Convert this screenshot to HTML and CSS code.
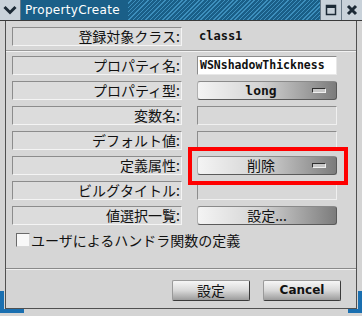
FILE: index.html
```html
<!DOCTYPE html>
<html lang="ja">
<head>
<meta charset="UTF-8">
<title>PropertyCreate</title>
<link rel="stylesheet" href="styles.css">
</head>
<body>
<div class="window">
  <div class="titlebar">
    <div class="tb-menu">
      <svg width="14" height="10" viewBox="0 0 14 10"><path d="M1.5 2 L7 7.5 L12.5 2" fill="none" stroke="#1c2a36" stroke-width="3"/></svg>
    </div>
    <div class="tb-title">PropertyCreate</div>
    <div class="tb-stripes"></div>
    <div class="tb-btn">
      <svg width="12" height="12" viewBox="0 0 12 12"><rect x="1.5" y="1.5" width="9" height="9" fill="none" stroke="#1c2a36" stroke-width="1.5"/><rect x="1" y="1" width="10" height="3" fill="#1c2a36"/></svg>
    </div>
    <div class="tb-btn">
      <svg width="12" height="12" viewBox="0 0 12 12"><path d="M2 2 L10 10 M10 2 L2 10" stroke="#1c2a36" stroke-width="3"/></svg>
    </div>
  </div>

  <div class="client">
    <div class="panel">
      <div class="section first">
        <div class="label">登録対象クラス:</div>
        <div class="value">class1</div>
      </div>
      <div class="section rows">
        <div class="label">プロパティ名:</div>
        <div class="field text">WSNshadowThickness</div>

        <div class="label">プロパティ型:</div>
        <div class="field option"><span>long</span><i class="ind"></i></div>

        <div class="label">変数名:</div>
        <div class="field empty"></div>

        <div class="label">デフォルト値:</div>
        <div class="field empty"></div>

        <div class="label">定義属性:</div>
        <div class="field option jp"><span>削除</span><i class="ind"></i></div>

        <div class="label">ビルグタイトル:</div>
        <div class="field empty"></div>

        <div class="label">値選択一覧:</div>
        <div class="field option jp push"><span>設定...</span></div>
      </div>
      <div class="check">
        <span class="box"></span>
        <span>ユーザによるハンドラ関数の定義</span>
      </div>
    </div>
    <div class="actions">
      <button class="btn jp">設定</button>
      <button class="btn bold">Cancel</button>
    </div>
  </div>

  <div class="highlight"></div>
  <div class="corner left"></div>
  <div class="corner right"></div>
</div>
</body>
</html>
```

FILE: styles.css
```css
body{
    margin: 0;
    padding: 0;
    background: #d4d4d4;
}

.window{
    position: relative;
    width: 362px;
    height: 316px;
    display: flex;
    flex-direction: column;
    background: #d4d4d4;
    font-family: "Noto Sans CJK JP", "DejaVu Sans", sans-serif;
    overflow: hidden;
}

/* title bar */
.titlebar{
    height: 20px;
    display: flex;
    background: #1a5f88;
    border-bottom: 1px solid #3a3a3a;
}
.tb-menu{
    width: 20px;
    display: flex;
    align-items: center;
    justify-content: center;
    background: #c9d2da;
    border-right: 1px solid #6a7a88;
}
.tb-title{
    padding: 0 8px 0 4px;
    color: #fff;
    font-family: "DejaVu Sans", sans-serif;
    font-size: 12px;
    line-height: 20px;
    letter-spacing: 0.3px;
}
.tb-stripes{
    flex: 1;
    background: repeating-linear-gradient(135deg, #1a5f88 0, #1a5f88 2px, #3d8fbd 2px, #3d8fbd 3px);
}
.tb-btn{
    width: 20px;
    display: flex;
    align-items: center;
    justify-content: center;
    background: #c9d2da;
    border-left: 1px solid #6a7a88;
}

/* client area */
.client{
    flex: 1;
    margin: 0 5px 7px 5px;
    display: flex;
    flex-direction: column;
    border: 1px solid #505050;
    border-top: none;
    background: #d4d4d4;
}
.panel{
    height: 247px;
    border-bottom: 1px solid #8a8a8a;
    box-shadow: 0 1px 0 #f0f0f0;
    background: #d6d6d6;
}
.section{
    display: grid;
    grid-template-columns: 170px 140px;
    column-gap: 15px;
    padding-left: 6px;
}
.first{
    padding-top: 6px;
    height: 23px;
    border-bottom: 1px solid #9a9a9a;
    box-shadow: 0 1px 0 #f2f2f2;
}
.rows{
    padding-top: 5px;
    row-gap: 6px;
}

.label{
    height: 17px;
    border: 1px solid;
    border-color: #8c8c8c #f4f4f4 #f4f4f4 #8c8c8c;
    background: #dcdcdc;
    text-align: right;
    font-size: 14px;
    line-height: 17px;
    color: #111;
    padding-right: 1px;
}
.value{
    padding-left: 2px;
    font-family: "DejaVu Sans Mono", monospace;
    font-weight: bold;
    font-size: 12px;
    line-height: 19px;
    color: #111;
}

.field{
    height: 17px;
    border: 1px solid;
    font-size: 14px;
    line-height: 17px;
}
.text{
    background: #fff;
    border-color: #8c8c8c #e8e8e8 #e8e8e8 #8c8c8c;
    padding-left: 2px;
    font-family: "DejaVu Sans Mono", monospace;
    font-weight: bold;
    font-size: 11.5px;
    color: #111;
}
.empty{
    background: #d8d8d8;
    border-color: #8c8c8c #f0f0f0 #f0f0f0 #8c8c8c;
}
.option{
    position: relative;
    border-color: #8a8a8a #5a5a5a #5a5a5a #b0b0b0;
    border-radius: 3px;
    background: linear-gradient(to right, #f4f4f4, #d4d4d4 45%, #7c7c7c);
    text-align: center;
    font-family: "DejaVu Sans Mono", monospace;
    font-weight: bold;
    font-size: 13px;
    color: #111;
}
.option span{
    display: inline-block;
    margin-left: -12px;
}
.option.jp{
    font-family: "Noto Sans CJK JP", sans-serif;
    font-weight: normal;
    font-size: 14px;
}
.push span{
    margin-left: 0;
}
.ind{
    position: absolute;
    right: 10px;
    top: 6px;
    width: 12px;
    height: 3px;
    border: 1px solid #303030;
    border-bottom-color: #f0f0f0;
    border-right-color: #f0f0f0;
    background: #c8c8c8;
}

.check{
    display: flex;
    align-items: center;
    gap: 1px;
    padding: 6px 0 0 10px;
    font-size: 14px;
    color: #111;
    line-height: 18px;
}
.box{
    width: 12px;
    height: 12px;
    background: #f8f8f8;
    border: 1px solid;
    border-color: #6a6a6a #d8d8d8 #d8d8d8 #6a6a6a;
}

/* buttons */
.actions{
    flex: 1;
    display: flex;
    justify-content: flex-end;
    align-items: flex-start;
    gap: 13px;
    padding: 11px 15px 0 0;
}
.btn{
    width: 78px;
    height: 21px;
    padding: 0;
    border: 1px solid;
    border-color: #9a9a9a #3a3a3a #3a3a3a #9a9a9a;
    border-radius: 2px;
    background: linear-gradient(#f6f6f6, #d8d8d8 50%, #9c9c9c);
    color: #111;
    font-family: "Noto Sans CJK JP", sans-serif;
    font-size: 14px;
    line-height: 19px;
}
.btn.bold{
    font-family: "DejaVu Sans", sans-serif;
    font-weight: bold;
    font-size: 12px;
}

/* red marker over the 定義属性 menu */
.highlight{
    position: absolute;
    left: 188px;
    top: 147px;
    width: 152px;
    height: 30px;
    border: 4px solid #f00;
}

/* resize corners of the window frame */
.corner{
    position: absolute;
    bottom: 3px;
    width: 20px;
    height: 18px;
    border-bottom: 4px solid #1a6fb0;
}
.corner.left{
    left: 0;
    border-left: 4px solid #1a6fb0;
}
.corner.right{
    right: 0;
    width: 10px;
    border-right: 4px solid #1a6fb0;
}
```
